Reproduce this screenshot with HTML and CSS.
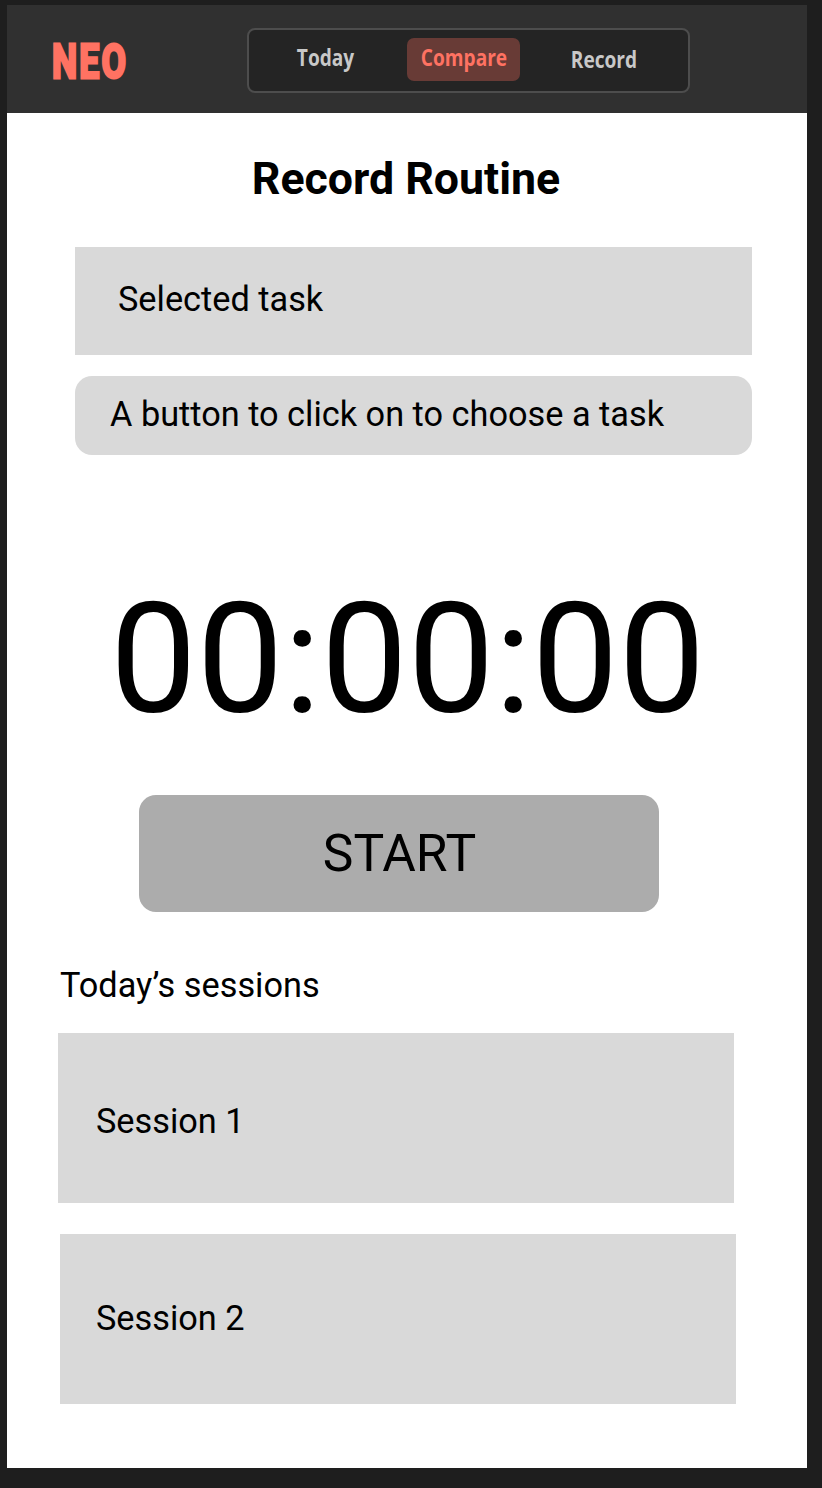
FILE: index.html
```html
<!DOCTYPE html>
<html lang="en">
<head>
<meta charset="utf-8">
<title>Record Routine</title>
<link rel="stylesheet" href="styles.css">
</head>
<body>
<div class="screen">
  <header class="header">
    <div class="logo"><span class="logo-text">NEO</span></div>
    <nav class="tabs">
      <a class="tab tab-today"><span class="tab-label">Today</span></a>
      <a class="tab tab-active"><span class="tab-label">Compare</span></a>
      <a class="tab tab-record"><span class="tab-label">Record</span></a>
    </nav>
  </header>
  <main class="main">
    <h1 class="title">Record Routine</h1>
    <div class="selected">Selected task</div>
    <button class="choose">A button to click on to choose a task</button>
    <div class="timer">00:00:00</div>
    <button class="start">START</button>
    <h2 class="subtitle">Today’s sessions</h2>
    <div class="session">Session 1</div>
    <div class="session session-second">Session 2</div>
  </main>
</div>
</body>
</html>
```
FILE: styles.css
```css
* { box-sizing: border-box; }
body {
  margin: 0;
  height: 1488px;
  padding: 5px 15px 20px 7px;
  background: #1e1e1e;
  font-family: Roboto, sans-serif;
  color: #000;
}
.screen { width: 800px; height: 1463px; background: #fff; }
.header {
  display: flex;
  height: 108px;
  padding: 23px 0 0 45px;
  background: #303030;
}
.logo {
  width: 195px;
  padding-top: 9px;
  color: #ff7262;
  font: 700 48px/50px Roboto, sans-serif;
}
.logo-text {
  display: inline-block;
  letter-spacing: 3px;
  transform: scaleX(.74);
  transform-origin: left;
  -webkit-text-stroke: 3px #ff7262;
  stroke-linejoin: round;
}
.tabs {
  display: flex;
  width: 443px;
  height: 65px;
  padding: 8px 0 0 29px;
  border: 2px solid #4d4d4d;
  border-radius: 8px;
  background: #242424;
  color: #c8c8c8;
  font: 700 23px/38px "Open Sans", sans-serif;
}
.tab { display: flex; justify-content: center; height: 43px; border-radius: 7px; }
.tab-today { width: 96px; }
.tab-active { width: 113px; margin: 0 34px 0 33px; background: #683b36; color: #ff7262; }
.tab-record { width: 99px; padding-top: 2px; }
.tab-label { transform: scaleX(.83); }
.title { margin: 0; padding: 40px 2px 0 0; height: 134px; text-align: center; font: 700 44.7px/52px Roboto, sans-serif; }
.main { font-size: 34.3px; }
.selected { width: 677px; height: 108px; margin-left: 68px; padding-left: 43px; background: #d9d9d9; line-height: 105px; }
.choose { display: block; width: 677px; height: 79px; margin: 21px 0 0 68px; padding: 0 0 3px 35px; border: 0; border-radius: 17px; background: #d9d9d9; color: #000; font: 34.3px/76px Roboto, sans-serif; text-align: left; }
.timer { height: 340px; padding: 110px 0 0 103px; font-size: 154.4px; line-height: 190px; }
.start { display: block; width: 520px; height: 117px; margin-left: 132px; padding: 0 0 0 1px; border: 0; border-radius: 17px; background: #acacac; color: #000; font: 51.5px/117px Roboto, sans-serif; }
.subtitle { height: 121px; margin: 0; padding: 53px 0 0 53px; font: 34.3px/40px Roboto, sans-serif; }
.session { width: 676px; height: 170px; margin-left: 51px; padding-left: 38px; background: #d9d9d9; line-height: 176px; }
.session-second { margin: 31px 0 0 53px; padding-left: 36px; line-height: 169px; }
```
